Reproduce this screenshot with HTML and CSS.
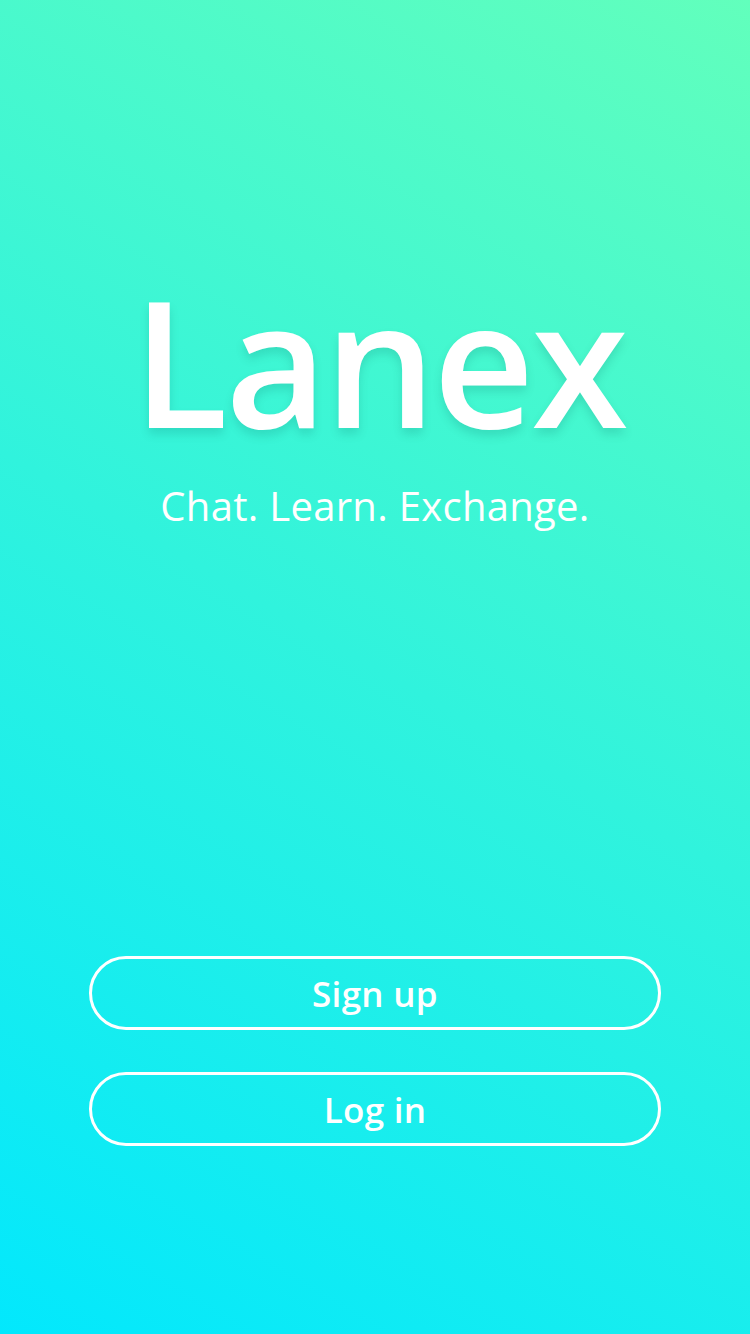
FILE: index.html
```html
<!DOCTYPE html>
<html>
<head>
<meta charset="utf-8">
<link rel="stylesheet" href="styles.css">
</head>
<body>
<main class="screen">
  <section class="brand">
    <h1 class="logo">Lanex</h1>
    <p class="tagline">Chat. Learn. Exchange.</p>
  </section>
  <section class="actions">
    <button class="pill">Sign up</button>
    <button class="pill">Log in</button>
  </section>
</main>
</body>
</html>
```
FILE: styles.css
```css
html, body {
  margin: 0;
  padding: 0;
}
body {
  width: 750px;
  height: 1334px;
  overflow: hidden;
  font-family: "Open Sans", "Lato", sans-serif;
  color: #fff;
}
.screen {
  height: 1334px;
  box-sizing: border-box;
  background: linear-gradient(30deg, #02e8fd 0%, #30f3dd 50%, #62ffbc 100%);
  display: flex;
  flex-direction: column;
  align-items: center;
  padding-top: 272px;
}
.brand {
  display: flex;
  flex-direction: column;
  align-items: center;
}
.logo {
  margin: 0 0 0 8px;
  font-size: 176px;
  font-weight: 600;
  line-height: 176px;
  letter-spacing: -3px;
  text-shadow: 0 6px 10px rgba(0, 90, 80, 0.16);
}
.tagline {
  margin: 34px 0 0;
  font-size: 40px;
  line-height: 48px;
  font-weight: 400;
  letter-spacing: 0.3px;
}
.actions {
  margin-top: auto;
  margin-bottom: 188px;
  display: flex;
  flex-direction: column;
  gap: 42px;
  width: 572px;
}
.pill {
  height: 74px;
  border: 3px solid #fff;
  border-radius: 37px;
  background: transparent;
  color: #fff;
  font-family: "Open Sans", "Lato", sans-serif;
  font-size: 35px;
  font-weight: 600;
  letter-spacing: 0.3px;
  padding: 0;
}
```
